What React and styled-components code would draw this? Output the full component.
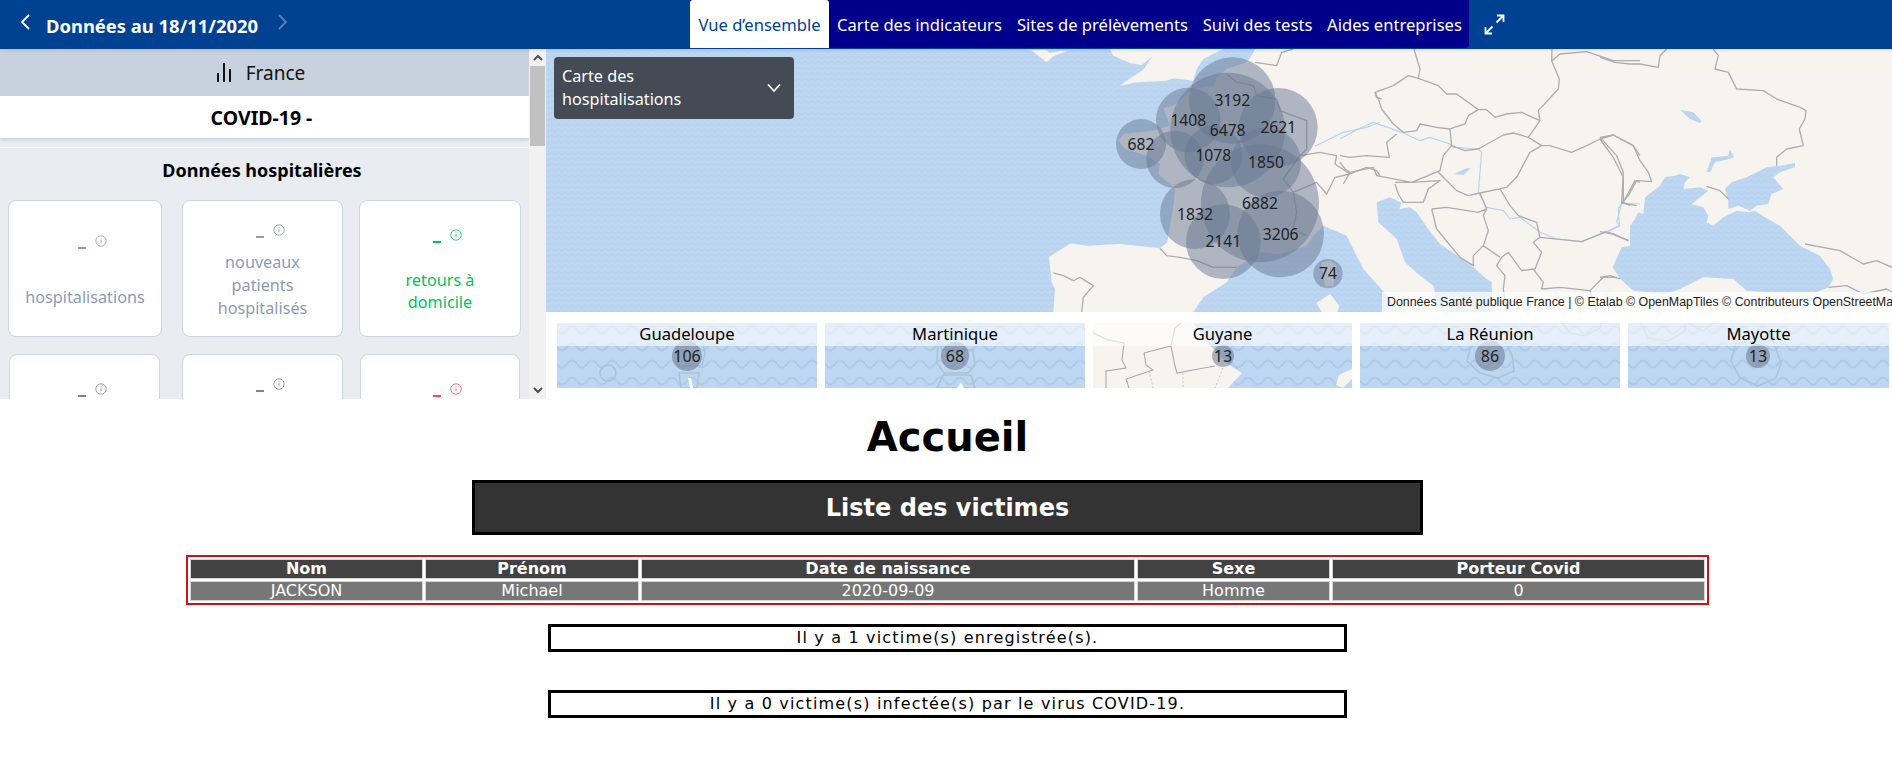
import React from "react";
import styled, { createGlobalStyle } from "styled-components";

const Global = createGlobalStyle`
  html, body { margin: 0; padding: 0; background: #fff; overflow: hidden; }
  * { box-sizing: border-box; }
`;
const SITE = `"Noto Sans", "Open Sans", sans-serif`;
const VERDANA = `"DejaVu Sans", Verdana, sans-serif`;

const Page = styled.div`width: 1892px; height: 781px; overflow: hidden;`;
const Widget = styled.section`height: 399px; display: flex; flex-direction: column; overflow: hidden;`;
const TopBar = styled.header`
  height: 49px; flex: none; background: #004191; display: grid; grid-template-columns: 690px auto 1fr;
  position: relative; z-index: 2; box-shadow: 0 1px 3px rgba(0,0,0,.12);
`;
const DateBox = styled.div`display: flex; align-items: center; padding-left: 19px; height: 44px; color: #fff;`;
const DateText = styled.div`font: 700 18.4px ${SITE}; margin: 6px 0 0 13px; white-space: nowrap; width: 229px;`;
const Tabs = styled.nav`display: flex; height: 48px; background: #00008b; border-radius: 0 0 4px 0;`;
const Tab = styled.div`
  height: 48px; display: flex; align-items: center; justify-content: center; width: ${p => p.$w}px;
  font: 400 16.6px ${SITE}; white-space: nowrap; color: ${p => (p.$active ? "#004191" : "#fff")};
  background: ${p => (p.$active ? "#fff" : "transparent")}; border-radius: ${p => (p.$active ? "3px 3px 0 0" : "0")};
`;
const Expand = styled.div`display: flex; align-items: center; padding: 0 0 0 15px; height: 48px;`;
const Body = styled.div`display: flex; flex: 1; min-height: 0;`;
const Side = styled.aside`width: 529px; flex: none; overflow: hidden; background: #e9edf2;`;
const FranceBar = styled.div`
  height: 47px; background: #c8d2de; display: flex; align-items: center; justify-content: center; gap: 14px;
  font: 400 19px ${SITE}; color: #111; padding-right: 8px;
`;
const Covid = styled.div`
  height: 42px; background: #fff; display: flex; align-items: center; justify-content: center;
  font: 700 19.5px ${SITE}; color: #000; box-shadow: 0 2px 3px rgba(120,135,160,.25); position: relative; padding: 1px 6px 0 0;
`;
const Sep = styled.div`height: 10px; border-bottom: 1px solid #f7f9fb;`;
const SectionTitle = styled.h2`
  margin: 0; height: 52px; padding: 9px 5px 0 0; text-align: center; font: 700 18px/26px ${SITE}; color: #000;
`;
const CardRow = styled.div`display: flex; padding-left: ${p => p.$pad}px; margin-bottom: 17px;`;
const Card = styled.div`
  flex: none; width: ${p => p.$w}px; margin-left: ${p => p.$ml || 0}px;
  height: 137px; background: #fff; border: 1px solid #ccd5e2; border-radius: 8px; display: flex; flex-direction: column;
  justify-content: space-around; align-items: center; text-align: center; color: ${p => p.$c};
`;
const Value = styled.div`
  height: 24px; margin: 7.5px 0 -29.5px; display: flex; align-items: center; justify-content: center; position: relative;
  width: 100%;
`;
const Dash = styled.span`display: block; width: 8px; height: 2px; background: currentColor; transform: translate(-3px, 0);`;
const Info = styled.svg`position: absolute; left: 50%; top: 0; margin-left: 10px; margin-top: -1px;`;
const Label = styled.div`font: 400 16.2px/22.8px ${SITE}; padding: 0 20px;`;
const Scroll = styled.div`width: 17px; flex: none; background: #f1f1f1; display: flex; flex-direction: column; justify-content: space-between; position: relative;`;
const Arrow = styled.div`height: 17px; display: flex; align-items: center; justify-content: center;`;
const Thumb = styled.div`position: absolute; left: 1px; right: 1px; top: 17px; height: 80px; background: #c1c1c1;`;
const Right = styled.div`flex: 1; min-width: 0; display: flex; flex-direction: column; background: #fff;`;
const MapBox = styled.div`height: 263px; position: relative; overflow: hidden; flex: none;`;
const MapSvg = styled.svg`display: block;`;
const Select = styled.div`
  position: absolute; left: 8px; top: 8px; width: 240px; height: 62px; background: #444b54; border-radius: 4px; color: #fff;
  display: flex; align-items: center; justify-content: space-between; padding: 0 12px 0 8px; font: 400 16.2px/23px ${SITE};
`;
const Attribution = styled.div`
  position: absolute; right: 0; bottom: 0; width: 510px; height: 20px; padding-left: 5px; background: rgba(255,255,255,.72); color: #222;
  font: 400 12.4px/20px "Liberation Sans", Arial, sans-serif; white-space: nowrap; overflow: hidden;
`;
const Minis = styled.div`display: grid; grid-template-columns: 260px 260px 259px 260px 261px; column-gap: 8px; padding: 11px 0 0 11px;`;
const Mini = styled.div`height: 65px; position: relative; overflow: hidden;`;
const MiniLabel = styled.div`
  position: absolute; left: 0; right: 0; top: 0; height: 23px; background: rgba(255,255,255,.6); text-align: center;
  font: 400 16.6px/22px ${SITE}; color: #000;
`;
const Main = styled.main`display: flex; flex-direction: column; align-items: center; padding-left: 3px; font-family: ${VERDANA};`;
const H1 = styled.h1`margin: 15px 0 0; height: 66px; font: 700 40px/47px ${VERDANA}; color: #000;`;
const ListTitle = styled.h2`
  margin: 0; width: 951px; height: 55px; background: #333; border: 3px solid #000; color: #fff; text-align: center;
  font: 700 24px/51px ${VERDANA};
`;
const Table = styled.table`
  margin-top: 20px; width: 1523px; height: 50px; border: 2px solid #c8141e; border-collapse: separate; border-spacing: 2px; table-layout: fixed;
  color: #fff; font: 400 16px/18px ${VERDANA}; text-align: center; background: #fff;
`;
const Th = styled.th`
  width: ${p => p.$w}px; height: 20px; padding: 0; background: #424242; border: 1px solid #d5d5d5; font-weight: 700;
`;
const Td = styled.td`height: 20px; padding: 0; background: #777; border: 1px solid #d5d5d5;`;
const Note = styled.p`
  margin: ${p => p.$mt}px 0 0; width: 799px; height: 28px; border: 3px solid #000; text-align: center; color: #000;
  font: 400 16px/21px ${VERDANA}; letter-spacing: 1.17px;
`;

const Waves = ({ id }) => (
  <pattern id={id} width="20" height="17" patternUnits="userSpaceOnUse">
    <rect width="20" height="17" fill="#bdd7f2" />
    <path d="M0 7 q5 7 10 0 t10 0" fill="none" stroke="#afcae8" strokeWidth="2" />
  </pattern>
);

const Z6 = "translate(534 0) scale(.3333)";
const Z7 = "translate(794 0) scale(.3333)";
const Z8 = "translate(1054 0) scale(.3333)";
const W = "url(#sea)";
const B = { fill: "none", stroke: "#aeacb0", strokeWidth: 4, strokeLinejoin: "round" };
const R = { fill: "none", stroke: "#b5d4f2", strokeWidth: 3.5, strokeLinejoin: "round" };

const clusters = [
  [183, 285, 75, "682"], [325, 213, 97, "1408"], [457, 155, 130, "3192"], [443, 243, 172, "6478", 245],
  [595, 235, 118, "2621"], [285, 331, 86, ""], [400, 318, 87, "1078"], [558, 340, 105, "1850"],
  [540, 463, 177, "6882"], [345, 495, 105, "1832"], [430, 578, 112, "2141"], [602, 555, 130, "3206"], [744, 674, 44, "74"],
];

const EuropeMap = () => (
  <MapSvg width="1346" height="263" viewBox="0 0 1346 263">
    <defs><Waves id="sea" /></defs>
    <rect width="1346" height="263" fill="#f7f4f0" />
    <g transform={Z6}>
      <path fill={W} d="M-1602 0L90 0 100 20 150 42 185 48 218 22 190 62 140 95 100 125 75 145 120 110 170 100 260 95 280 88 340 95 350 60 370 30 400 15 430 0 525 0 520 12 500 40 440 60 410 85 405 110 340 120 280 170 250 178 270 230 220 245 130 255 115 275 135 300 200 320 240 345 235 375 285 420 280 470 270 530 262 580 240 598 120 585 20 590-27 583-93 624-85 700-75 720-80 789-1602 789Z" />
      <path fill="#f7f4f0" d="M-147 3L-100 3-90 12-60 5-39 6-80 22-100 40-125 20Z" />
      <path fill={W} d="M340 789L370 745 440 700 470 655 540 610 600 615 680 590 700 560 730 530 800 560 850 660 915 732 960 789Z" />
      <path fill="#f7f4f0" d="M725 640L750 635 770 650 760 710 735 712ZM710 762L750 735 778 770 772 789 725 789Z" />
      <path {...B} d="M440 75L470 100 520 110 530 140 590 150 600 185 680 215 680 300 660 320 610 390 640 430 650 490 640 540 680 560M525 40L590 50 605 10 640 0M240 598L260 620 300 625 350 635 400 655 470 655M660 320L720 310 770 320 765 345 810 375 860 355 890 365 900 380M640 430L710 400 740 435 765 385 810 375M0 685L40 710 10 745 5 789M0 685L-20 695-50 680-80 672M885 130L890 145 905 150" />
      <path {...R} d="M705 292L790 250 860 235 900 220" />
    </g>
    <g transform={Z7}>
      <path fill={W} d="M110 460L150 445 185 462 178 480 210 475 230 490 265 540 300 585 360 625 400 655 440 690 455 700 458 789 300 789 280 710 240 680 195 640 170 570 115 520Z" />
      <path fill={W} d="M342 375L380 358 392 358 370 378Z" />
      <path {...R} d="M0 270L55 240 100 220 185 250 240 275 270 265 330 285 340 295 415 300 425 310 415 430 440 475 490 485 510 510 540 505 600 550 650 570 725 578 800 548 838 530 835 480 845 462 900 465" />
      <path {...B} d="M105 130L160 110 205 80 235 88 295 110 320 135 350 135 415 182 385 200 375 225 330 240 290 235 240 225 230 245 190 250 160 225 125 180 115 150ZM222 0L240 60 235 88M415 182L440 182 465 205 500 195 545 190 600 215M636 0L635 35 658 90 655 120 595 185 600 215M636 35L660 15 740 8 820 35 900 35M330 240L335 290 375 305 415 300 490 258 520 252 565 265M600 215L565 265 605 290M605 290L630 290 695 310 740 290 780 270 820 258 880 290 900 320M605 290L570 310 530 385 500 415 420 432M335 290L310 320 300 365 215 400 110 380 100 355 30 370 15 360 0 340M170 255L140 280 148 325 80 320 30 325 0 320M295 370L350 425 385 440 420 432M480 420L510 470 535 500 590 520 600 565 725 578 800 548 865 575M420 432L440 480 430 500 445 545 430 590M275 480L320 475 415 490 440 480M275 480L290 540 360 625 400 650 400 620 430 590 480 625M165 400L215 400 300 395 265 420 250 460 190 460 175 435 165 405M600 565L580 580 605 610 585 660 545 665 505 610 485 625 470 650 495 680 490 720 500 789M545 665L580 660 610 700 605 720 660 715 750 725 790 685 830 685M780 270L820 325 850 385 850 460 870 470M850 460L885 395 900 400M30 370L10 405M750 725L770 789" />
    </g>
    <g transform={Z8}>
      <path fill={W} d="M65 595L90 590 90 530 105 510 115 490 130 495 135 445 180 410 195 385 225 380 240 375 270 385 255 400 250 420 300 415 325 425 275 465 310 475 325 500 320 520 340 530 370 505 410 485 445 490 465 485 495 505 540 530 600 590 660 620 690 660 700 690 685 715 650 730 500 730 440 725 400 690 310 685 240 720 200 735 100 725 60 690 38 655Z" />
      <path fill={W} d="M385 480L385 455 375 420 395 400 440 385 500 355 540 350 585 342 585 355 540 370 520 385 550 420 515 435 505 465 470 470 450 485 415 470Z" />
      <path fill={W} d="M240 182L280 190 305 215 300 222 270 210ZM320 368L335 325 385 320 390 302 402 325 380 332 345 340 330 370Z" />
      <path {...R} d="M65 462L50 520 60 530 20 550" />
      <path {...B} d="M0 265L40 258 100 290 120 335 145 370 155 398 110 395 85 440 65 462 110 470M0 265L50 320 70 370 65 462M0 548L40 555 85 575M340 0L355 20 345 60 385 70 410 120 490 125 530 150 600 175 618 185 615 210 598 240 610 290 560 300 530 325 530 350M0 25L45 40 90 45 120 45 175 55 180 20 200 0M320 412L360 425 385 450M615 585L720 605 790 645 830 635 876 655M0 685L30 680 60 690M685 715L740 710 790 735 860 720 876 730" />
    </g>
    <g transform={Z6}>
      {clusters.map(([x, y, r]) => <circle key={`${x}${y}`} cx={x} cy={y} r={r} fill="rgba(104,120,145,.5)" />)}
      {clusters.map(([x, y, , t, ty]) => t && (
        <text key={t} x={x} y={ty || y} dy="17" textAnchor="middle" fontFamily={SITE} fontSize="47" fill="#222">{t}</text>
      ))}
    </g>
  </MapSvg>
);

const MiniOutline = { fill: "none", stroke: "#a8c5d8", strokeWidth: 1.6 };
const minis = [
  { name: "Guadeloupe", n: "106", r: 15, art: <><path {...MiniOutline} d="M120 26L123 18 145 18 148 30 145 43 122 43ZM122 50L142 50 140 65 124 65Z" /><circle {...MiniOutline} cx="51" cy="50" r="8" /><path fill="#fff" d="M131 55L134 55 136 65 133 65Z" /></> },
  { name: "Martinique", n: "68", r: 14, art: <><path {...MiniOutline} d="M113 15L117 27 148 27 150 42 143 50 119 50 112 40ZM118 52L146 52 150 65 112 65Z" /><path fill="#fff" d="M132 65L136 60 139 65Z" /></> },
  { name: "Guyane", n: "13", r: 11, art: <><path fill="#f7f4f0" d="M0 0L100 0 118 23 136 42 149 50 135 65 0 65Z" /><path fill="none" stroke="#aaa8ad" strokeWidth="1.1" d="M0 10L15 17 31 20 29 37 33 45 13 48 13 65M51 30L78 23 82 43 84 50 100 47 122 43M51 30L53 42 60 47 33 56 36 65M78 23L82 5 88 0" /><path fill="none" stroke="#c5c3c6" strokeDasharray="2 2" d="M90 50L90 65M56 48L60 65M130 45L122 65" /><path fill="#f7f4f0" d="M246 52L259 46 259 56 250 65 243 62Z" /></> },
  { name: "La Réunion", n: "86", r: 15, art: <><path {...MiniOutline} d="M110 25L122 17 144 17 152 32 154 48 138 55 120 50 107 38ZM202 0L210 10 225 13 240 5 241 0" /></> },
  { name: "Mayotte", n: "13", r: 12, art: <><path {...MiniOutline} d="M108 20L145 18 153 40 148 55 130 63 112 55 103 38ZM13 0L20 15 40 18 57 8 57 0M60 0L75 8 85 0" /></> },
];

const Chevron = ({ d, c }) => (
  <svg width="14" height="18" viewBox="0 0 14 18"><path d={d} fill="none" stroke={c} strokeWidth="1.8" /></svg>
);
const InfoDot = () => (
  <Info width="12" height="12" viewBox="0 0 12 12" fill="none" stroke="currentColor" opacity=".8">
    <circle cx="6" cy="6" r="5.2" />
    <path d="M6 3.4v.9M6 5.2v3.2" />
  </Info>
);
const Stat = ({ c, label, w, ml }) => (
  <Card $c={c} $w={w} $ml={ml}>
    <Value><Dash /><InfoDot /></Value>
    <Label>{label}</Label>
  </Card>
);

export default function App() {
  return (
    <Page>
      <Global />
      <Widget>
        <TopBar>
          <DateBox>
            <Chevron d="M10 2L3 9l7 7" c="#fff" />
            <DateText>Données au 18/11/2020</DateText>
            <Chevron d="M4 2l7 7-7 7" c="#5f82b8" />
          </DateBox>
          <Tabs>
            <Tab $active $w={139}>Vue d’ensemble</Tab>
            <Tab $w={181}>Carte des indicateurs</Tab>
            <Tab $w={185}>Sites de prélèvements</Tab>
            <Tab $w={125}>Suivi des tests</Tab>
            <Tab $w={149}>Aides entreprises</Tab>
          </Tabs>
          <Expand>
            <svg width="21" height="21" viewBox="0 0 21 21" fill="none" stroke="#fff" strokeWidth="1.8">
              <path d="M13 1.5h6.5V8M19.5 1.5L12.5 8.5M1.5 13v6.5H8M1.5 19.5l7-7" />
            </svg>
          </Expand>
        </TopBar>
        <Body>
          <Side>
            <FranceBar>
              <svg width="16" height="19" viewBox="0 0 16 19" fill="#111"><rect x="1" y="10" width="2" height="9" /><rect x="7" y="0" width="2" height="19" /><rect x="13" y="6" width="2" height="13" /></svg>
              France
            </FranceBar>
            <Covid>COVID-19 -</Covid>
            <Sep />
            <SectionTitle>Données hospitalières</SectionTitle>
            <CardRow $pad={8}>
              <Stat c="#8d9bb3" label="hospitalisations" w={154} />
              <Stat c="#8d9bb3" label="nouveaux patients hospitalisés" w={161} ml={20} />
              <Stat c="#03bf60" label="retours à domicile" w={162} ml={16} />
            </CardRow>
            <CardRow $pad={9}>
              <Stat c="#75849d" label="en réanimation" w={151} />
              <Stat c="#75849d" label="nouveaux patients en réanimation" w={161} ml={22} />
              <Stat c="#e2506f" label="décès à l’hôpital" w={160} ml={17} />
            </CardRow>
          </Side>
          <Scroll>
            <Arrow><svg width="10" height="7" viewBox="0 0 10 7"><path d="M1 6l4-4 4 4" fill="none" stroke="#505050" strokeWidth="2" /></svg></Arrow>
            <Thumb />
            <Arrow><svg width="10" height="7" viewBox="0 0 10 7"><path d="M1 1l4 4 4-4" fill="none" stroke="#505050" strokeWidth="2" /></svg></Arrow>
          </Scroll>
          <Right>
            <MapBox>
              <EuropeMap />
              <Select>
                <span>Carte des<br />hospitalisations</span>
                <svg width="16" height="10" viewBox="0 0 16 10"><path d="M2 1.5l6 6.5 6-6.5" fill="none" stroke="#fff" strokeWidth="1.8" /></svg>
              </Select>
              <Attribution>Données Santé publique France | © Etalab © OpenMapTiles © Contributeurs OpenStreetMap</Attribution>
            </MapBox>
            <Minis>
              {minis.map((m, i) => (
                <Mini key={m.name}>
                  <svg width="262" height="65" viewBox="0 0 262 65" style={{ display: "block" }}>
                    <defs><Waves id={`sea${i}`} /></defs>
                    <rect width="262" height="65" fill={`url(#sea${i})`} />
                    {m.art}
                    <circle cx="130" cy="33" r={m.r} fill="rgba(100,110,130,.5)" />
                    <text x="130" y="39" textAnchor="middle" fontFamily={SITE} fontSize="16" fill="#222">{m.n}</text>
                  </svg>
                  <MiniLabel>{m.name}</MiniLabel>
                </Mini>
              ))}
            </Minis>
          </Right>
        </Body>
      </Widget>
      <Main>
        <H1>Accueil</H1>
        <ListTitle>Liste des victimes</ListTitle>
        <Table>
          <thead>
            <tr>
              <Th $w={233}>Nom</Th><Th $w={214}>Prénom</Th><Th $w={494}>Date de naissance</Th><Th $w={193}>Sexe</Th><Th $w={373}>Porteur Covid</Th>
            </tr>
          </thead>
          <tbody>
            <tr><Td>JACKSON</Td><Td>Michael</Td><Td>2020-09-09</Td><Td>Homme</Td><Td>0</Td></tr>
          </tbody>
        </Table>
        <Note $mt={19}>Il y a 1 victime(s) enregistrée(s).</Note>
        <Note $mt={38}>Il y a 0 victime(s) infectée(s) par le virus COVID-19.</Note>
      </Main>
    </Page>
  );
}
